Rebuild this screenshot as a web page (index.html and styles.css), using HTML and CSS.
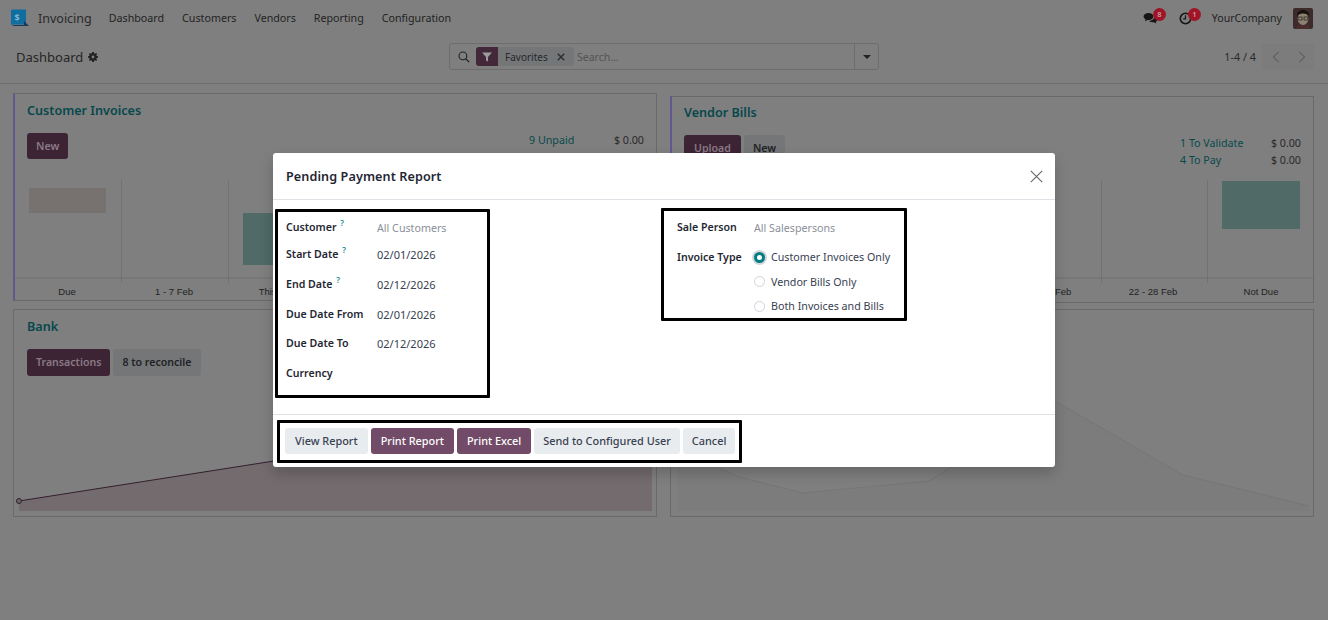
FILE: index.html
```html
<!DOCTYPE html>
<html lang="en">
<head>
<meta charset="utf-8">
<title>Pending Payment Report</title>
<link rel="stylesheet" href="styles.css">
</head>
<body>
<header class="nav">
  <svg class="logo" viewBox="0 0 20 20" width="20" height="20"><path d="M2 1.500h11l3 0v15H3.500L1 17V2.500z" fill="#0f6d9f"/><path d="M14 1v12l5 5H4l-2-1h12z" fill="#16395a"/><text x="4.500" y="12.500" class="logo-s">$</text></svg>
  <span class="app">Invoicing</span>
  <nav class="menu"><a>Dashboard</a><a>Customers</a><a>Vendors</a><a>Reporting</a><a>Configuration</a></nav>
  <div class="systray">
    <span class="tray tray-chat">
      <svg viewBox="0 0 16 14" width="15" height="13"><path d="M6 1c3 0 5 1.600 5 3.800S9 8.500 6 8.500H5L2 10l.8-2.200C1.500 7.200 .5 6 .5 4.800.5 2.600 3 1 6 1z" fill="#151515"/><path d="M12 5.500c2 .4 3.200 1.500 3.200 2.800 0 .9-.6 1.700-1.500 2.200l.6 2-2.800-1.500H10c-1.500 0-2.700-.5-3.400-1.300 3-.1 5.400-1.800 5.400-4.200z" fill="#151515"/></svg>
      <b class="badge">8</b>
    </span>
    <span class="tray tray-clock">
      <svg viewBox="0 0 14 14" width="13" height="13"><circle cx="7" cy="7" r="5.600" fill="none" stroke="#151515" stroke-width="1.700"/><path d="M7 3.500V7.500H4.500" fill="none" stroke="#151515" stroke-width="1.300"/></svg>
      <b class="badge">1</b>
    </span>
    <span class="company">YourCompany</span>
    <svg class="avatar" viewBox="0 0 20 21" width="20" height="21"><rect width="20" height="21" rx="2" fill="#3d2b2b"/><path d="M3 21c.5-4 3-5 7-5s6.500 1 7 5z" fill="#4a2c2c"/><ellipse cx="10" cy="10.500" rx="5.500" ry="6.500" fill="#8f8170"/><path d="M4 9c-.5-5 3-7 6-7s7 2 6 7c-1-3-3-3.500-6-3.500S5 6 4 9z" fill="#17120f"/><rect x="5" y="9" width="4" height="3" fill="none" stroke="#222" stroke-width=".7"/><rect x="11" y="9" width="4" height="3" fill="none" stroke="#222" stroke-width=".7"/></svg>
  </div>
</header>

<section class="panel">
  <div class="crumb"><span>Dashboard</span>
    <svg viewBox="0 0 12 12" width="10" height="10"><path d="M5 0h2l.3 1.600 1.100.5L9.800 1.200l1.100 1.100-.9 1.400.4 1.100 1.600.3v1.800l-1.600.3-.4 1.100.9 1.400-1.100 1.100-1.400-.9-1.100.5L7 12H5l-.3-1.600-1.100-.5-1.400.9-1.100-1.100.9-1.400-.4-1.100L0 6.900V5.100l1.600-.3.4-1.100-.9-1.400 1.100-1.100 1.400.9 1.100-.5z" fill="#222"/><circle cx="6" cy="6" r="1.700" fill="#7f7f7f"/></svg>
  </div>
  <div class="search">
    <svg class="glass" viewBox="0 0 14 14" width="12" height="12"><circle cx="5.700" cy="5.700" r="4.500" fill="none" stroke="#222" stroke-width="1.300"/><path d="M9 9l4 4" stroke="#222" stroke-width="1.500"/></svg>
    <span class="facet"><span class="facet-ico"><svg viewBox="0 0 10 10" width="10" height="10"><path d="M0 .5h10L6 5v4.500L4 8.500V5z" fill="#9b9b9b"/></svg></span><span class="facet-text">Favorites</span><svg class="facet-x" viewBox="0 0 8 8" width="8" height="8"><path d="M.8.8l6.400 6.400M7.200.8L.8 7.200" stroke="#2c2f33" stroke-width="1.500"/></svg></span>
    <span class="placeholder">Search...</span>
    <span class="toggle"><i class="caret"></i></span>
  </div>
  <div class="pager"><span class="count">1-4 / 4</span>
    <span class="arrows">
      <svg viewBox="0 0 8 14" width="8" height="12"><path d="M7 1L1 7l6 6" fill="none" stroke="#4a4a4a" stroke-width="1"/></svg>
      <svg viewBox="0 0 8 14" width="8" height="12"><path d="M1 1l6 6-6 6" fill="none" stroke="#4a4a4a" stroke-width="1"/></svg>
    </span>
  </div>
</section>

<main class="board">
  <article class="card card-sales">
    <div class="head"><div class="lead"><h2>Customer Invoices</h2><div class="btns"><a class="btn dark">New</a></div></div>
      <div class="stats stats-sales"><div><a>9 Unpaid</a><span>$ 0.00</span></div><div><a>5 Late</a><span>$ 0.00</span></div></div></div>
    <svg class="chart chart-sales" viewBox="0 0 642 122" width="642" height="122">
      <g class="grid"><path d="M107.500 0V103M214.500 0V103M321.500 0V103M428.500 0V103M535.500 0V103"/></g>
      <path class="axis" d="M0 98H642"/>
      <rect x="15" y="8" width="77" height="25" class="bar-grey"/>
      <rect x="229" y="33" width="77" height="52" class="bar-teal"/>
      <g class="labels"><text x="53" y="115">Due</text><text x="160" y="115">1 - 7 Feb</text><text x="267" y="115">This Week</text><text x="374" y="115">8 - 14 Feb</text><text x="481" y="115">22 - 28 Feb</text><text x="588" y="115">Not Due</text></g>
    </svg>
  </article>

  <article class="card card-bills">
    <div class="head"><div class="lead"><h2>Vendor Bills</h2><div class="btns"><a class="btn dark wide">Upload</a><a class="btn soft">New</a></div></div>
      <div class="stats stats-bills"><div><a>1 To Validate</a><span>$ 0.00</span></div><div><a>4 To Pay</a><span>$ 0.00</span></div></div></div>
    <svg class="chart chart-bills" viewBox="0 0 644 122" width="644" height="122">
      <g class="grid"><path d="M109.500 0V103M216.500 0V103M323.500 0V103M430.500 0V103M536.500 0V103"/></g>
      <path class="axis" d="M0 98H644"/>
      <rect x="551" y="1" width="78" height="48" class="bar-teal"/>
      <g class="labels"><text x="55" y="115">Due</text><text x="162" y="115">1 - 7 Feb</text><text x="269" y="115">This Week</text><text x="376" y="115">15 - 21 Feb</text><text x="482" y="115">22 - 28 Feb</text><text x="590" y="115">Not Due</text></g>
    </svg>
  </article>

  <article class="card card-bank">
    <div class="lead"><h2>Bank</h2><div class="btns"><a class="btn dark tall">Transactions</a><a class="btn soft tall">8 to reconcile</a></div></div>
    <svg class="line" viewBox="0 0 644 130" width="644" height="130">
      <path d="M5 119L260 79L638 58V129H5z" fill="#736b6e"/>
      <path d="M5 119L260 79" fill="none" stroke="#341f2e" stroke-width="1"/>
      <circle cx="5" cy="119" r="2.500" fill="#666" stroke="#341f2e"/>
    </svg>
  </article>

  <article class="card card-other">
    <svg class="line line-other" viewBox="0 0 644 207" width="644" height="207">
      <path d="M6 140L68 167L132 183L258 171L384 91L512 165L638 196V201H6z" fill="#7c7c7c"/>
      <path d="M6 140L68 167L132 183L258 171L384 91L512 165L638 196" fill="none" stroke="#767676"/>
    </svg>
  </article>
</main>

<div class="dialog" role="dialog">
  <div class="dialog-head"><h1>Pending Payment Report</h1>
    <svg class="close" viewBox="0 0 13 13" width="13" height="13"><path d="M.8.800l11.400 11.400M12.200.800L.8 12.200" stroke="#666" stroke-width="1.100"/></svg>
  </div>
  <div class="dialog-body">
    <div class="col col-left">
      <div class="row short"><label>Customer <sup>?</sup></label><span class="val muted">All Customers</span></div>
      <div class="row"><label>Start Date <sup>?</sup></label><span class="val">02/01/2026</span></div>
      <div class="row"><label>End Date <sup>?</sup></label><span class="val">02/12/2026</span></div>
      <div class="row mid"><label>Due Date From</label><span class="val">02/01/2026</span></div>
      <div class="row"><label>Due Date To</label><span class="val">02/12/2026</span></div>
      <div class="row"><label>Currency</label></div>
    </div>
    <div class="col col-right">
      <div class="row row-r"><label>Sale Person</label><span class="val muted">All Salespersons</span></div>
      <div class="row row-r row-radios"><label>Invoice Type</label>
        <div class="radios">
          <div class="radio on"><i></i><span>Customer Invoices Only</span></div>
          <div class="radio"><i></i><span>Vendor Bills Only</span></div>
          <div class="radio"><i></i><span>Both Invoices and Bills</span></div>
        </div>
      </div>
    </div>
  </div>
  <div class="dialog-foot">
    <a class="mbtn">View Report</a><a class="mbtn primary">Print Report</a><a class="mbtn primary">Print Excel</a><a class="mbtn tight">Send to Configured User</a><a class="mbtn tight">Cancel</a>
  </div>
  <div class="mark mark-a"></div>
  <div class="mark mark-b"></div>
  <div class="mark mark-c"></div>
</div>
</body>
</html>
```

FILE: styles.css
```css
* { box-sizing: border-box; }
html, body { margin: 0; height: 620px; overflow: hidden; }
body { background: #7f7f7f; font-family: "Noto Sans", sans-serif; color: #232323; font-size: 11px; position: relative; }
a { color: inherit; }
h1, h2 { margin: 0; }

.nav { height: 37px; display: flex; align-items: center; padding: 0 15px 1px 10px; }
.logo { flex: none; }
.logo-s { font-size: 9px; font-weight: 700; fill: #7fb8d6; font-family: "Noto Sans", sans-serif; }
.app { font-size: 12.5px; margin-left: 8px; color: #2a2a2a; }
.menu { display: flex; gap: 18px; margin-left: 17px; font-size: 10.7px; color: #232323; }
.systray { margin-left: auto; display: flex; align-items: center; }
.tray { position: relative; display: block; }
.tray svg { display: block; }
.tray-chat { margin-right: 21px; }
.tray-clock { margin-right: 20px; }
.badge { position: absolute; left: 10px; top: -4px; width: 13px; height: 13px; border-radius: 50%; background: #a01526; color: #c99aa2; font-size: 7.5px; font-weight: 600; line-height: 13px; text-align: center; }
.tray-clock .badge { left: 9px; }
.company { font-size: 10.6px; margin-right: 11px; color: #232323; }
.avatar { display: block; }

.panel { height: 47px; border-bottom: 1px solid #6c6c6c; display: flex; align-items: center; padding: 0 14px 7px 16px; position: relative; }
.crumb { display: flex; align-items: center; gap: 5px; font-size: 13px; color: #262626; width: 433px; }
.crumb svg { margin-top: 1px; }
.search { width: 430px; height: 27px; border: 1px solid #6d6d6d; border-radius: 3px; display: flex; align-items: center; padding-left: 8px; }
.glass { flex: none; }
.facet { display: flex; align-items: center; height: 19px; width: 98px; margin-left: 6px; background: #747678; border-radius: 3px; overflow: hidden; }
.facet-ico { width: 22px; height: 19px; background: #432839; display: flex; align-items: center; justify-content: center; }
.facet-text { font-size: 10px; margin-left: 7px; color: #26292d; }
.facet-x { margin-left: 9px; }
.placeholder { font-size: 10.5px; color: #545454; margin-left: 3px; }
.toggle { margin-left: auto; width: 24px; height: 100%; border-left: 1px solid #6d6d6d; display: flex; align-items: center; justify-content: center; }
.caret { width: 0; height: 0; border: 4px solid transparent; border-top: 4px solid #222; border-bottom: 0; }
.pager { margin-left: auto; display: flex; align-items: center; gap: 6px; }
.count { font-size: 10.8px; color: #2a2a2a; }
.arrows { width: 52px; height: 26px; background: #7c7c7c; display: flex; align-items: center; justify-content: space-between; padding: 0 8px 0 10px; border-radius: 3px; }

.board { display: grid; grid-template-columns: 644px 644px; column-gap: 13px; row-gap: 6px; grid-template-rows: 210px 208px; padding: 9px 0 0 13px; }
.card { border: 1px solid #6a6a6a; overflow: hidden; }
.card-sales { height: 208px; border-left: 2px solid #5e5a90; padding: 8px 0 0; }
.card-bills { margin-top: 3px; height: 207px; border-left: 2px solid #5e5a90; padding: 7px 0 0; }
.card-bank { padding: 8px 0 0; }
.head { display: flex; justify-content: space-between; height: 78px; }
.lead { padding-left: 12px; }
.card-bank .lead { padding-left: 13px; }
.card-bills .lead { padding-left: 12px; }
h2 { font-size: 12.6px; font-weight: 600; color: #07484c; line-height: 18px; }
.btns { display: flex; gap: 3px; margin-top: 13px; }
.btn { font-size: 10.6px; font-weight: 600; height: 26px; line-height: 26px; padding: 0 9px; border-radius: 3px; }
.btn.wide { padding: 0 10px; }
.btn.tall { height: 27px; line-height: 27px; }
.dark { background: #3c2434; color: #8a7a86; }
.soft { background: #747678; color: #1f2226; }
.stats { font-size: 10.7px; line-height: 17px; }
.stats div { display: flex; justify-content: space-between; }
.stats a { color: #084a4c; }
.stats span { color: #2a2a2a; }
.stats-sales { width: 115px; margin: 30px 12px 0 0; }
.stats-bills { width: 121px; margin: 31px 12px 0 0; }
.chart { display: block; }
.chart-sales { margin-left: -1px; }
.chart-bills { margin-top: -2px; margin-left: -1px; }
.grid path { stroke: #727272; fill: none; }
.axis { stroke: #707070; fill: none; }
.bar-grey { fill: #77716f; }
.bar-teal { fill: #4f6a67; }
.labels text { font-family: "Liberation Sans", sans-serif; font-size: 9.500px; fill: #222; text-anchor: middle; }
.line { display: block; margin-top: 6px; }
.line-other { margin-top: 0; }

.dialog { position: absolute; left: 273px; top: 153px; width: 782px; height: 314px; background: #fff; border-radius: 3px; box-shadow: 0 6px 14px rgba(0,0,0,.2); display: flex; flex-direction: column; color: #1f2733; }
.dialog-head { height: 47px; border-bottom: 1px solid #dee2e6; display: flex; align-items: center; justify-content: space-between; padding: 0 12px 0 13px; flex: none; }
h1 { font-size: 12.6px; font-weight: 600; color: #1f2733; letter-spacing: .1px; }
.dialog-body { flex: 1; display: flex; padding-top: 17px; }
.col-left { margin-left: 13px; width: 391px; }
.row { display: flex; height: 30px; }
.row.short { height: 27px; }
.row.mid { height: 29px; }
label { width: 91px; font-size: 10.6px; font-weight: 600; line-height: 16px; padding-top: 2px; color: #1f2733; flex: none; white-space: nowrap; }
sup { font-size: 8px; color: #0c8a92; line-height: 0; vertical-align: 5px; margin-left: 1px; }
.val { font-size: 11px; line-height: 16px; padding-top: 3px; color: #374151; }
.muted { color: #8a8f98; font-size: 10.7px; }
.row-r label { width: 77px; }
.row-radios { height: auto; }
.radios { margin-top: -2px; }
.radio { display: flex; align-items: center; height: 24.500px; font-size: 10.7px; color: #374151; }
.radio i { width: 11px; height: 11px; border-radius: 50%; border: 1px solid #d0d4d9; margin-right: 6px; flex: none; }
.radio.on i { background: #fff; border: 3px solid #017e84; box-shadow: 0 0 0 2px #d5d7da; }
.dialog-foot { height: 53px; border-top: 1px solid #dee2e6; display: flex; align-items: center; gap: 3px; padding: 0 0 0 12px; flex: none; }
.mbtn { height: 26px; line-height: 26px; padding: 0 10px; font-size: 10.9px; font-weight: 500; background: #e9ecef; color: #374151; border-radius: 3px; white-space: nowrap; }
.mbtn.tight { padding: 0 9px; }
.mbtn.primary { background: #714b67; color: #fff; }

.mark { position: absolute; border: 3px solid #000; border-radius: 1px; }
.mark-a { left: 2px; top: 56px; width: 215px; height: 189px; }
.mark-b { left: 388px; top: 55px; width: 246px; height: 113px; }
.mark-c { left: 4px; top: 267px; width: 465px; height: 43px; }
```
